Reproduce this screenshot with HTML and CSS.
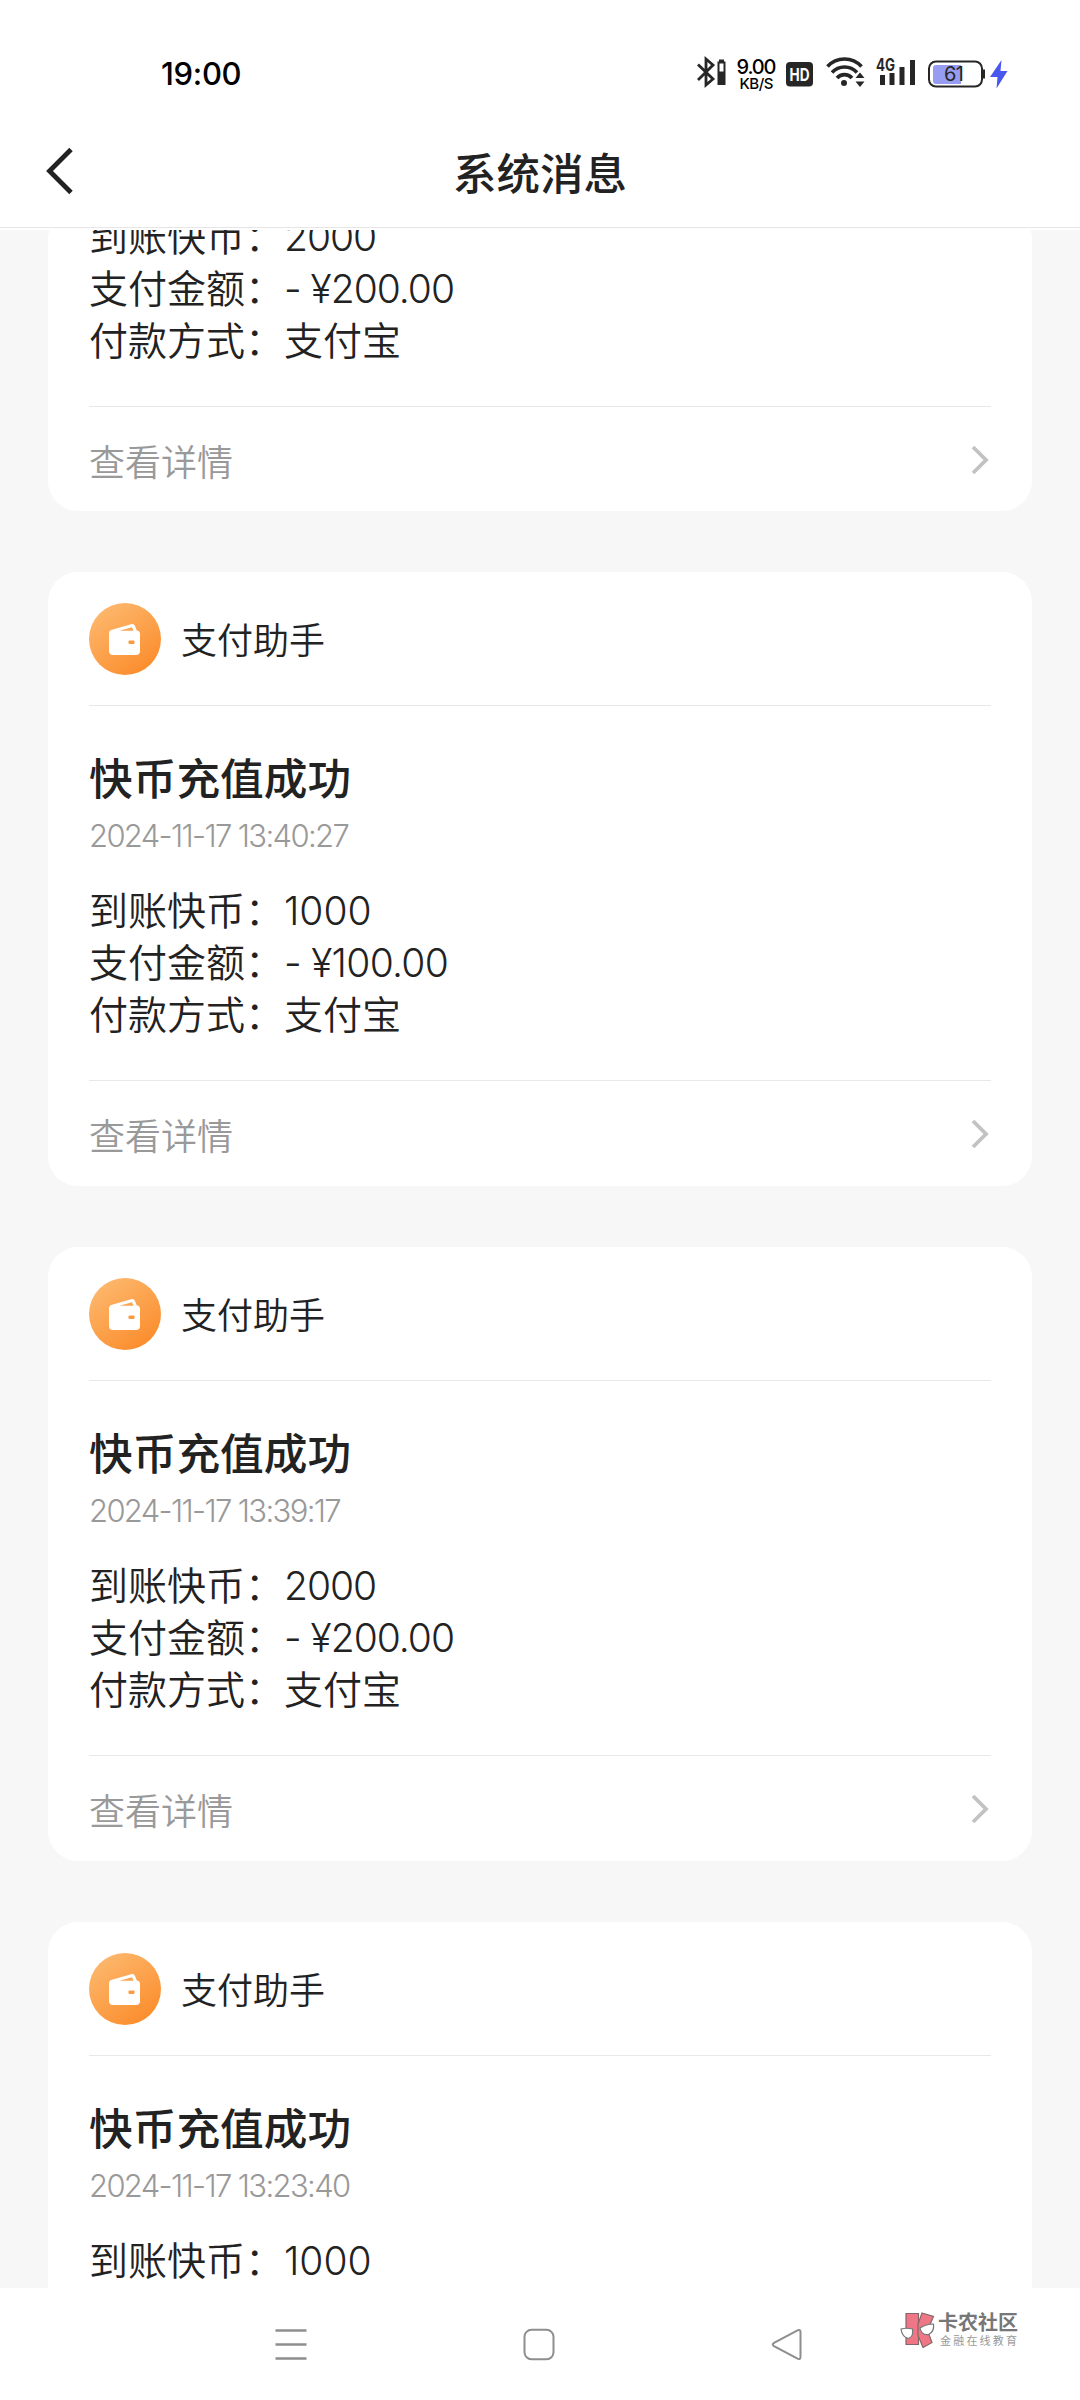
FILE: index.html
```html
<!DOCTYPE html>
<html lang="zh-CN">
<head>
<meta charset="utf-8">
<title>系统消息</title>
<link rel="stylesheet" href="styles.css">
</head>
<body>
<svg class="defs" width="0" height="0" aria-hidden="true">
  <defs>
    <linearGradient id="orange" x1="0.1" y1="0" x2="0.8" y2="1">
      <stop offset="0" stop-color="#fdbb72"/>
      <stop offset="1" stop-color="#fb8b2a"/>
    </linearGradient>
    <symbol id="wallet" viewBox="0 0 72 72">
      <circle cx="36" cy="36" r="36" fill="url(#orange)"/>
      <path d="M20 30q0-2.500 3-3.300L42 21.300q3-.8 4 1.700l1.800 4.600q3.200.2 3.200 4V48q0 4-4 4H24q-4 0-4-4z" fill="#fff"/>
      <path d="M30.500 27.800l12.500-3.600 1.500 3.600z" fill="#fba550"/>
      <rect x="39.500" y="37.500" width="6" height="3.600" rx="1" fill="#fb9a40"/>
    </symbol>
    <symbol id="more" viewBox="0 0 18 30">
      <path d="M2 2l13 13L2 28" fill="none" stroke="#c2c2c2" stroke-width="3.800"/>
    </symbol>
  </defs>
</svg>
<div class="screen">
  <div class="status">
    <span class="clock">19:00</span>
    <svg class="status-icons" width="320" height="40" viewBox="0 0 320 40">
      <g fill="none" stroke="#262626" stroke-width="2.800">
        <path d="M0 11.500L15 26l-7 6V6l7 6L0 27"/>
      </g>
      <path d="M19.500 8.500h1.500V6.500h5v2H27.500V32H19.500z" fill="#262626"/>
      <rect x="21.500" y="10.500" width="4" height="8" fill="#fff"/>
      <text class="net-speed" x="58.500" y="20.500" text-anchor="middle" textLength="40">9.00</text>
      <text class="net-unit" x="58.500" y="36" text-anchor="middle" textLength="34">KB/S</text>
      <rect x="88" y="9" width="27" height="24.500" rx="4" fill="#262626"/>
      <text class="hd" x="101.500" y="28" text-anchor="middle" textLength="20" lengthAdjust="spacingAndGlyphs">HD</text>
      <g fill="none" stroke="#262626" stroke-width="3.600">
        <path d="M129.500 13.500a23 23 0 0 1 34 0"/>
        <path d="M134 19.500a17 17 0 0 1 25 0"/>
        <path d="M139 25a10 10 0 0 1 15 0"/>
      </g>
      <circle cx="146" cy="30" r="3" fill="#262626"/>
      <path d="M157.500 25l4.500-5.500 4.500 5.500zM157.500 28.500h9L162 34z" fill="#262626"/>
      <text class="cell" x="178" y="17.500" textLength="19" lengthAdjust="spacingAndGlyphs">4G</text>
      <path d="M182 22h5v10h-5zM191.500 20h5v12h-5zM201.500 14h5v18h-5zM212 7h5v25h-5z" fill="#262626"/>
      <rect x="231" y="8.500" width="53" height="25" rx="7" fill="#fff" stroke="#262626" stroke-width="2"/>
      <path d="M238 12h25v19h-25q-3 0-3-3V15q0-3 3-3z" fill="#979cf3"/>
      <path d="M286 16.500v9" stroke="#262626" stroke-width="2"/>
      <text class="charge" x="256" y="28" text-anchor="middle" textLength="20">61</text>
      <path d="M303.500 7l-11.500 17h7.500l-1 11.500 11-17.500h-7z" fill="#4a57ee"/>
    </svg>
  </div>
  <header class="topbar">
    <svg class="back" width="30" height="48" viewBox="0 0 30 48"><path d="M26 2.500L4.500 24 26 45.500" fill="none" stroke="#222" stroke-width="4.800"/></svg>
    <h1 class="page-title">系统消息</h1>
  </header>
  <main class="feed">
    <article class="card card-cut">
      <ul class="details">
        <li><span class="label">到账快币：</span><span class="value tight">2000</span></li>
        <li><span class="label">支付金额：</span><span class="value tight">- ¥200.00</span></li>
        <li><span class="label">付款方式：</span><span class="value">支付宝</span></li>
      </ul>
      <footer class="card-foot"><span>查看详情</span><svg class="more" width="18" height="30"><use href="#more"/></svg></footer>
    </article>
    <article class="card">
      <header class="card-head"><svg width="72" height="72"><use href="#wallet"/></svg><span class="sender">支付助手</span></header>
      <h2 class="card-title">快币充值成功</h2>
      <time class="date">2024-11-17 13:40:27</time>
      <ul class="details">
        <li><span class="label">到账快币：</span><span class="value">1000</span></li>
        <li><span class="label">支付金额：</span><span class="value snug">- ¥100.00</span></li>
        <li><span class="label">付款方式：</span><span class="value">支付宝</span></li>
      </ul>
      <footer class="card-foot"><span>查看详情</span><svg class="more" width="18" height="30"><use href="#more"/></svg></footer>
    </article>
    <article class="card">
      <header class="card-head"><svg width="72" height="72"><use href="#wallet"/></svg><span class="sender">支付助手</span></header>
      <h2 class="card-title">快币充值成功</h2>
      <time class="date">2024-11-17 13:39:17</time>
      <ul class="details">
        <li><span class="label">到账快币：</span><span class="value tight">2000</span></li>
        <li><span class="label">支付金额：</span><span class="value tight">- ¥200.00</span></li>
        <li><span class="label">付款方式：</span><span class="value">支付宝</span></li>
      </ul>
      <footer class="card-foot"><span>查看详情</span><svg class="more" width="18" height="30"><use href="#more"/></svg></footer>
    </article>
    <article class="card">
      <header class="card-head"><svg width="72" height="72"><use href="#wallet"/></svg><span class="sender">支付助手</span></header>
      <h2 class="card-title">快币充值成功</h2>
      <time class="date">2024-11-17 13:23:40</time>
      <ul class="details">
        <li><span class="label">到账快币：</span><span class="value">1000</span></li>
      </ul>
    </article>
  </main>
  <nav class="navbar">
    <svg width="34" height="34" viewBox="0 0 34 34"><path d="M1.500 2.500h31M1.500 16.500h31M1.500 30.500h31" stroke="#8e8e8e" stroke-width="2.600"/></svg>
    <svg width="34" height="34" viewBox="0 0 34 34"><rect x="2.500" y="1.800" width="29" height="29.500" rx="7" fill="none" stroke="#8e8e8e" stroke-width="2"/></svg>
    <svg width="34" height="34" viewBox="0 0 34 34"><path d="M27.500 2.300L4 14.800q-2.500 1.700 0 3.400l23.500 12.500q3 1.300 3-2V4.300q0-3.300-3-2z" fill="none" stroke="#8e8e8e" stroke-width="2"/></svg>
  </nav>
  <div class="watermark">
    <svg width="36" height="36" viewBox="0 0 36 36">
      <g fill="#ee7685" stroke="#85676b" stroke-width="1.200">
        <path d="M6 1.500h12.500v31H6z"/>
        <path d="M22 1l11.500 3.500-6 14 4.500 12-9 5-5-12V12z"/>
      </g>
      <g fill="#fff" stroke="#777" stroke-width="1.200">
        <path d="M1 17q5-1.500 11.500 0 1.500 7-4 9.500Q2 25 1 17z"/>
        <path d="M20 16q6-4 13.500-4 1 8-5 10.500-7 1-8.500-6.500z"/>
      </g>
    </svg>
    <div class="wm-text"><span class="wm-name">卡农社区</span><span class="wm-sub">金融在线教育</span></div>
  </div>
</div>
</body>
</html>
```
FILE: styles.css
```css
* { box-sizing: border-box; }
body {
  margin: 0;
  background: #fff;
  color: #222;
  font-family: Inter, "Noto Sans CJK SC", sans-serif;
}
h1, h2, ul { margin: 0; padding: 0; list-style: none; }
svg { display: block; flex: none; }
.defs { position: absolute; }
.screen {
  position: relative;
  display: flex;
  flex-direction: column;
  width: 1080px;
  height: 2400px;
  overflow: hidden;
}
.status {
  display: flex;
  justify-content: space-between;
  align-items: center;
  height: 116px;
  padding: 30px 62px 0 161px;
}
.clock {
  color: #000;
  font-size: 31px;
  font-weight: 450;
  letter-spacing: -0.3px;
}
.status-icons { overflow: visible; }
.status-icons text { font-family: Inter, sans-serif; fill: #262626; }
.status-icons .net-speed { font-size: 20px; font-weight: 500; fill: #000; }
.status-icons .net-unit { font-size: 15px; font-weight: 500; fill: #000; }
.status-icons .hd { font-size: 18px; font-weight: 700; fill: #fff; }
.status-icons .cell { font-size: 17px; font-weight: 700; }
.status-icons .charge { font-size: 20px; font-weight: 400; }
.topbar {
  display: grid;
  grid-template-columns: 120px 1fr 120px;
  align-items: center;
  height: 112px;
  border-bottom: 1px solid #e6e6e6;
}
.back { margin: -2px 0 0 45px; }
.page-title {
  padding-top: 5px;
  text-align: center;
  font-size: 43.500px;
  font-weight: 500;
  line-height: 60px;
}
.feed {
  display: flex;
  flex-direction: column;
  gap: 61px;
  height: 2058px;
  margin-top: 2px;
  padding: 0 48px;
  overflow: hidden;
  background: #f7f7f7;
}
.card {
  flex: none;
  height: 614px;
  padding: 0 41px;
  border-radius: 30px;
  background: #fff;
}
.card-cut { height: 302px; margin-top: -21px; }
.card-cut .details { padding-top: 2px; padding-bottom: 39px; }
.card-head {
  display: flex;
  align-items: center;
  gap: 20px;
  height: 134px;
  border-bottom: 1px solid #e8e8e8;
}
.sender { padding-top: 5px; font-size: 36px; font-weight: 350; line-height: 52px; }
.card-title {
  padding-top: 47px;
  font-size: 43.700px;
  font-weight: 500;
  line-height: 54px;
}
.date {
  display: block;
  margin-top: 9px;
  color: #999;
  font-size: 31px;
  font-weight: 300;
  line-height: 40px;
  letter-spacing: -1.650px;
}
.details { padding-bottom: 39px; font-size: 39px; font-weight: 350; line-height: 52px; }
.date + .details { margin-top: 29px; }
.details li { display: flex; height: 52px; }
.label { width: 195px; }
.tight { letter-spacing: -1px; }
.snug { letter-spacing: -0.700px; }
.card-foot {
  display: flex;
  justify-content: space-between;
  align-items: center;
  height: 106px;
  padding-right: 2px;
  padding-top: 1px;
  border-top: 1px solid #e8e8e8;
  color: #999;
  font-size: 36px;
  font-weight: 350;
}
.navbar {
  display: flex;
  justify-content: space-between;
  height: 112px;
  padding: 40px 276px 0 274px;
  background: #fff;
}
.watermark {
  position: absolute;
  left: 900px;
  top: 2312px;
  display: flex;
  gap: 2px;
}
.wm-text { display: flex; flex-direction: column; white-space: nowrap; }
.wm-name { color: #777; font-size: 20px; font-weight: 700; line-height: 22px; }
.wm-sub { padding-left: 2px; color: #999; font-size: 11px; line-height: 14px; letter-spacing: 2.200px; }
```
